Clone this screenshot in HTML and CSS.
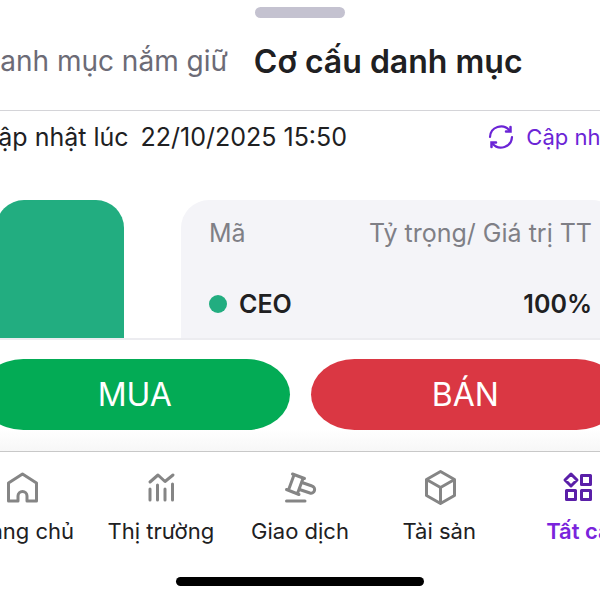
FILE: index.html
```html
<!DOCTYPE html>
<html lang="vi">
<head>
  <meta charset="UTF-8">
  <meta name="viewport" content="width=device-width, initial-scale=1.0">
  <title>Cơ cấu danh mục</title>
  <link rel="stylesheet" href="styles.css">
</head>
<body>
  <div class="screen">
    <header class="sheet-header">
      <div class="handle"></div>
      <div class="tabs">
        <button type="button" class="tab">Danh mục nắm giữ</button>
        <button type="button" class="tab active">Cơ cấu danh mục</button>
      </div>
    </header>

    <main class="content">
      <div class="update-row">
        <p class="update-time"><span>Cập nhật lúc</span><span>22/10/2025 15:50</span></p>
        <button type="button" class="refresh">
          <svg width="26" height="26" viewBox="0 0 26 26" fill="none" stroke="currentColor" stroke-width="2.200" stroke-linecap="round">
            <path d="M2 13A11 11 0 0 1 21.500 6.500M24 13A11 11 0 0 1 4.500 19.500"/>
            <path d="M22.500 3V7.500H18M3.500 23V18.500H8" stroke-width="2.500"/>
          </svg>
          Cập nhật
        </button>
      </div>

      <div class="allocation">
        <div class="chart"></div>
        <div class="holdings">
          <table>
            <thead>
              <tr><th>Mã</th><th>Tỷ trọng/ Giá trị TT</th></tr>
            </thead>
            <tbody>
              <tr><td><span class="dot"></span>CEO</td><td>100%</td></tr>
            </tbody>
          </table>
        </div>
      </div>
    </main>

    <div class="actions">
      <button type="button" class="buy">MUA</button>
      <button type="button" class="sell">BÁN</button>
    </div>

    <nav class="bottom-nav">
      <a href="#">
        <svg width="36" height="36" viewBox="0 0 36 36" fill="none" stroke="currentColor" stroke-width="3" stroke-linejoin="round" stroke-linecap="round">
          <path d="M4.500 32V14L18.500 5L32.500 14V32H23V27A4.500 4.500 0 0 0 14 27V32Z"/>
        </svg>
        <span>Trang chủ</span>
      </a>
      <a href="#">
        <svg width="36" height="36" viewBox="0 0 36 36" fill="none" stroke="currentColor" stroke-width="3" stroke-linecap="round">
          <path d="M7 20V31M14.500 16V31M22 20V31M29.500 15V31"/>
          <path d="M7 13L15 6L22 12.500L30 6" stroke-linejoin="round"/>
        </svg>
        <span>Thị trường</span>
      </a>
      <a href="#">
        <svg width="36" height="36" viewBox="0 0 36 36" fill="none" stroke="currentColor" stroke-width="3" stroke-linecap="round" stroke-linejoin="round">
          <path d="M10.500 5L22.500 9.500M4.500 20.500L17 25.500M12 6L6.500 21M21 9.500L15.500 24.500"/>
          <path d="M20 13.500L30 17A3.500 3.500 0 0 1 28 24L17.500 20.500"/>
          <path d="M4.500 32H23"/>
        </svg>
        <span>Giao dịch</span>
      </a>
      <a href="#">
        <svg width="36" height="36" viewBox="0 0 36 36" fill="none" stroke="currentColor" stroke-width="3" stroke-linejoin="round">
          <path d="M19.500 2.500L33.500 10.500V26.500L19.500 34.500L5.500 26.500V10.500ZM5.500 10.500L19.500 18.500L33.500 10.500M19.500 18.500V34.500"/>
        </svg>
        <span>Tài sản</span>
      </a>
      <a href="#" class="current">
        <svg width="36" height="36" viewBox="0 0 36 36" fill="none" stroke="currentColor" stroke-width="3" stroke-linejoin="round">
          <path d="M11 5L17 11L11 17L5 11ZM21.500 6.500H30.500V15.500H21.500ZM6.500 21.500H15.500V30.500H6.500ZM21.500 21.500H30.500V30.500H21.500Z"/>
        </svg>
        <span>Tất cả</span>
      </a>
    </nav>
    <div class="home-bar"></div>
  </div>
</body>
</html>
```
FILE: styles.css
```css
* {
  box-sizing: border-box;
}
body {
  margin: 0;
  background: #fff;
  color: #202022;
  font-family: Inter, "Noto Sans", sans-serif;
  overflow: hidden;
}
button {
  padding: 0;
  border: none;
  background: none;
  font: inherit;
  color: inherit;
  cursor: pointer;
}
/* the phone screen runs past both sides of the window */
.screen {
  margin: 0 -48px;
}
.sheet-header {
  padding-top: 7px;
  border-bottom: 1px solid #d4d4d8;
}
.handle {
  width: 90px;
  height: 11px;
  margin: 0 auto;
  border-radius: 6px;
  background: #c4c2d0;
}
.tabs {
  display: flex;
  align-items: center;
  gap: 26px;
  height: 92px;
  padding: 0 28px 6px;
  white-space: nowrap;
}
.tab {
  font-size: 28px;
  color: #6c6b76;
}
.tab.active {
  font-size: 32px;
  font-weight: 600;
  color: #202022;
}
.content {
  padding: 0 28px;
}
.update-row {
  display: flex;
  justify-content: space-between;
  align-items: center;
  height: 52px;
}
.update-time {
  display: flex;
  gap: 12px;
  margin: 0;
  font-size: 25px;
}
.refresh {
  display: flex;
  align-items: center;
  gap: 12px;
  font-size: 22px;
  color: #6b24d6;
}
.allocation {
  display: flex;
  gap: 57px;
  height: 138px;
  margin-top: 37px;
  padding-left: 16px;
}
.chart {
  width: 128px;
  border-radius: 28px 28px 0 0;
  background: #22ad80;
}
.holdings {
  flex: 1;
  padding: 0 28px;
  border-radius: 28px 28px 0 0;
  background: #f4f4f8;
}
.holdings table {
  width: 100%;
  border-collapse: collapse;
}
.holdings th,
.holdings td {
  padding: 0;
  font-size: 25px;
  text-align: left;
  white-space: nowrap;
}
.holdings th {
  height: 66px;
  font-weight: 400;
  color: #7f7f86;
}
.holdings td {
  height: 76px;
  font-weight: 600;
}
.holdings th:last-child,
.holdings td:last-child {
  text-align: right;
}
.dot {
  display: inline-block;
  width: 18px;
  height: 18px;
  margin-right: 12px;
  border-radius: 50%;
  background: #22ad80;
}
.actions {
  display: flex;
  gap: 21px;
  padding: 19px 28px 21px;
  border-top: 2px solid #ececf0;
  background: linear-gradient(#fff 80%, #f7f7f7);
}
.actions button {
  flex: 1;
  height: 71px;
  border-radius: 44px / 36px;
  font-size: 32px;
  color: #fff;
}
.actions .buy {
  background: #03ab55;
}
.actions .sell {
  background: #da3743;
}
.bottom-nav {
  display: flex;
  padding-top: 17px;
  border-top: 1px solid #c8c8c8;
}
.bottom-nav a {
  flex: 1;
  display: flex;
  flex-direction: column;
  align-items: center;
  gap: 12px;
  font-size: 22px;
  line-height: 28px;
  color: #202022;
  text-decoration: none;
  white-space: nowrap;
}
.bottom-nav svg {
  color: #858585;
}
.bottom-nav .current {
  font-weight: 600;
  color: #7a24dc;
}
.bottom-nav .current svg {
  color: #5a1fa8;
}
.home-bar {
  width: 248px;
  height: 9px;
  margin: 32px auto 0;
  border-radius: 5px;
  background: #000;
}
```
